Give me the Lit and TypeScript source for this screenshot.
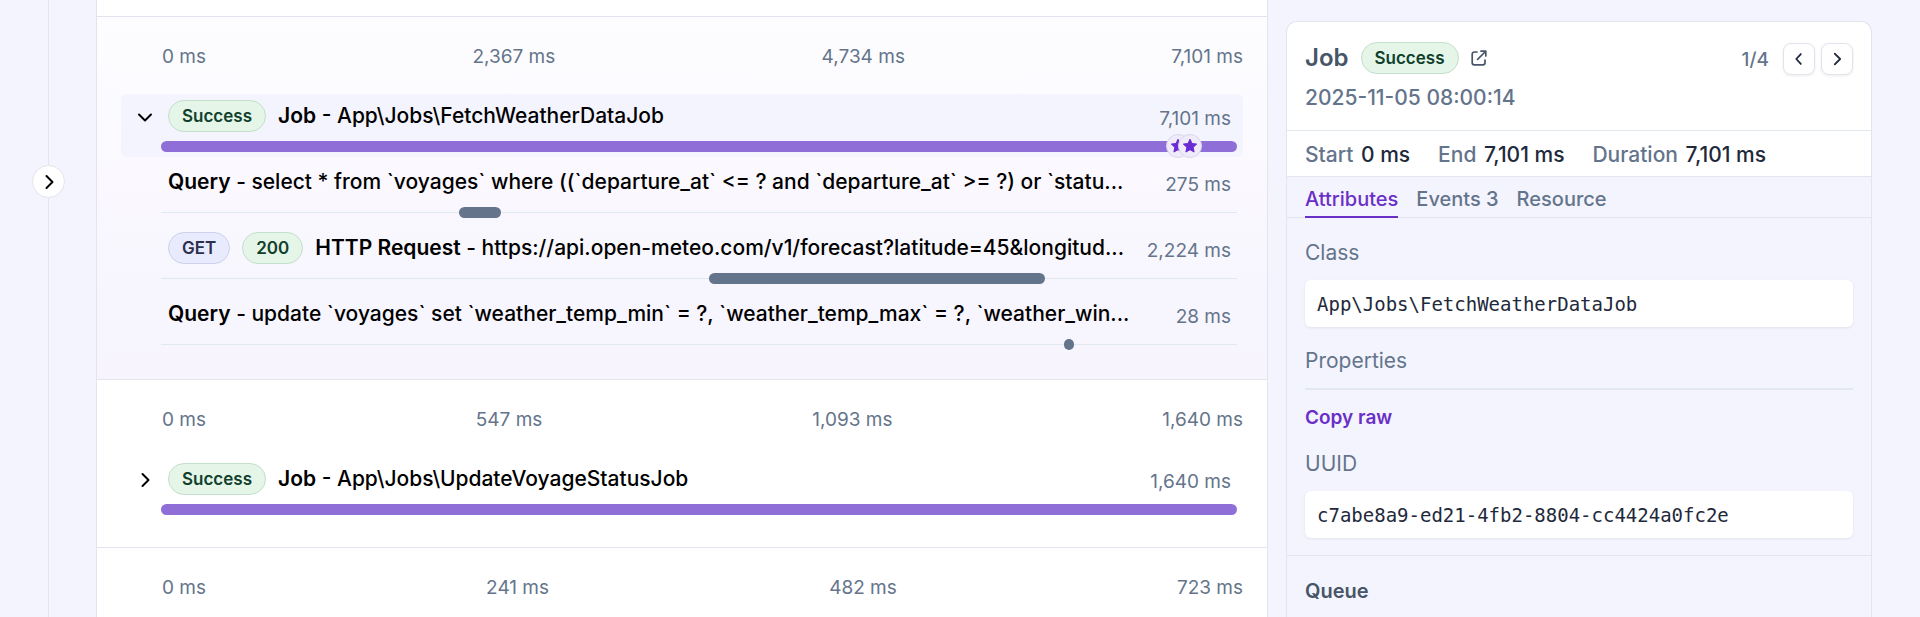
import { LitElement, html, css, svg, nothing } from "lit";
import { customElement, property, state } from "lit/decorators.js";
import { classMap } from "lit/directives/class-map.js";

type Badge = { text: string; tone: "green" | "blue" };
type Span = {
  kind: string;
  detail: string;
  badges?: Badge[];
  duration: string;
  start: number;
  width: number;
  events?: number[];
};
type Trace = { ticks: string[]; job?: Span; children?: Span[]; open?: boolean };

const traces: Trace[] = [
  {
    ticks: ["0 ms", "2,367 ms", "4,734 ms", "7,101 ms"],
    open: true,
    job: {
      kind: "Job",
      detail: "App\\Jobs\\FetchWeatherDataJob",
      badges: [{ text: "Success", tone: "green" }],
      duration: "7,101 ms",
      start: 0,
      width: 100,
      events: [94.5, 95.6],
    },
    children: [
      {
        kind: "Query",
        detail: "select * from `voyages` where ((`departure_at` <= ? and `departure_at` >= ?) or `statu...",
        duration: "275 ms",
        start: 27.7,
        width: 3.9,
      },
      {
        kind: "HTTP Request",
        detail: "https://api.open-meteo.com/v1/forecast?latitude=45&longitud...",
        badges: [
          { text: "GET", tone: "blue" },
          { text: "200", tone: "green" },
        ],
        duration: "2,224 ms",
        start: 50.9,
        width: 31.3,
      },
      {
        kind: "Query",
        detail: "update `voyages` set `weather_temp_min` = ?, `weather_temp_max` = ?, `weather_win...",
        duration: "28 ms",
        start: 83.9,
        width: 0.4,
      },
    ],
  },
  {
    ticks: ["0 ms", "547 ms", "1,093 ms", "1,640 ms"],
    job: {
      kind: "Job",
      detail: "App\\Jobs\\UpdateVoyageStatusJob",
      badges: [{ text: "Success", tone: "green" }],
      duration: "1,640 ms",
      start: 0,
      width: 100,
    },
  },
  { ticks: ["0 ms", "241 ms", "482 ms", "723 ms"] },
];

const chevron = (dir: "left" | "right" | "down", size = 20) => {
  const d = {
    left: "M12 4.5 7 10l5 5.5",
    right: "M7.5 4 13.5 10l-6 6",
    down: "M4 7.5 10 13.5l6-6",
  }[dir];
  return html`<svg width=${size} height=${size} viewBox="0 0 20 20" fill="none" stroke="currentColor"
    stroke-width="2" stroke-linecap="round" stroke-linejoin="round" aria-hidden="true">${svg`<path d=${d} />`}</svg>`;
};

const star = html`<svg width="16" height="16" viewBox="0 0 16 16" fill="currentColor" aria-hidden="true">
  <path d="M8 1.2 10 5.5l4.7.6-3.5 3.2.9 4.7L8 11.7 3.9 14l.9-4.7L1.3 6.1 6 5.5z" stroke="currentColor" stroke-width="1" stroke-linejoin="round" />
</svg>`;

const badgeStyles = css`
  .badge {
    flex: none;
    box-sizing: border-box;
    height: 32px;
    padding: 0 13px;
    border: 1px solid;
    border-radius: 16px;
    font-size: 17px;
    font-weight: 600;
    line-height: 30px;
  }
  .green {
    background: #e5f6e9;
    border-color: #c4dfcb;
    color: #10402c;
  }
  .blue {
    background: #e8ebfe;
    border-color: #cdd2ea;
    color: #2b2f4e;
  }
`;

@customElement("trace-row")
class TraceRow extends LitElement {
  @property({ attribute: false }) span!: Span;
  @property({ type: Boolean }) selected = false;
  @property({ type: Boolean }) expandable = false;
  @property({ type: Boolean }) open = false;

  static styles = [
    badgeStyles,
    css`
      :host {
        display: block;
      }
      .row {
        display: grid;
        grid-template-columns: 40px minmax(0, 1fr);
        padding-right: 6px;
        height: 63px;
        border-radius: 6px;
      }
      .selected {
        background: #f4f4fe;
      }
      .toggle {
        display: grid;
        place-items: center;
        width: 32px;
        height: 32px;
        margin: 7px 0 0 8px;
        padding: 0;
        border: 0;
        background: none;
        color: #000;
      }
      .body {
        grid-column: 2;
        min-width: 0;
      }
      .line {
        display: flex;
        align-items: center;
        gap: 12px;
        height: 46px;
        padding: 0 6px 2px 7px;
        box-sizing: border-box;
        margin-bottom: 1px;
      }
      .label {
        flex: 1;
        min-width: 0;
        overflow: hidden;
        white-space: nowrap;
        text-overflow: ellipsis;
        font-size: 21px;
        line-height: 28px;
        font-weight: 500;
        color: #000;
      }
      .kind {
        font-weight: 600;
      }
      .duration {
        font-size: 19px;
        line-height: 24px;
        color: #64748b;
        padding-top: 5px;
      }
      .track {
        position: relative;
        height: 11px;
        background: linear-gradient(#e2e8f0, #e2e8f0) center / 100% 1px no-repeat;
      }
      .bar {
        box-sizing: border-box;
        min-width: 10px;
        height: 11px;
        border-radius: 6px;
        background: #64748b;
      }
      .job {
        background: #8f6fd7;
      }
      .event {
        position: absolute;
        top: -7px;
        display: grid;
        place-items: center;
        box-sizing: border-box;
        width: 24px;
        height: 24px;
        border: 1px solid #dcd5ee;
        border-radius: 50%;
        background: #efebfa;
        color: #6a2bd3;
      }
    `,
  ];

  render() {
    const s = this.span;
    return html`<div class=${classMap({ row: true, selected: this.selected })}>
      ${this.expandable
        ? html`<button class="toggle" aria-label="Toggle children" aria-expanded=${this.open ? "true" : "false"}
            @click=${() => this.dispatchEvent(new CustomEvent("toggle-row"))}>
            ${chevron(this.open ? "down" : "right")}
          </button>`
        : nothing}
      <div class="body">
        <div class="line">
          ${s.badges?.map((b) => html`<span class="badge ${b.tone}">${b.text}</span>`)}
          <span class="label"><span class="kind">${s.kind}</span> - ${s.detail}</span>
          <span class="duration">${s.duration}</span>
        </div>
        <div class="track">
          <div class=${classMap({ bar: true, job: s.kind === "Job" })}
            style="margin-left:${s.start}%;width:${s.width}%"></div>
          ${s.events?.map((at) => html`<span class="event" style="left:calc(${at}% - 12px)">${star}</span>`)}
        </div>
      </div>
    </div>`;
  }
}

@customElement("trace-section")
class TraceSection extends LitElement {
  @property({ attribute: false }) trace!: Trace;
  @state() private closed = false;

  static styles = css`
    :host {
      display: block;
      border-top: 1px solid #e2e4ee;
    }
    .wrap {
      padding: 0 24px 24px;
    }
    .open {
      background: linear-gradient(#fdfdff, #faf8fe 50%, #f7f6fe 75%, #f7f4fe);
    }
    .ticks {
      display: flex;
      justify-content: space-between;
      padding: 28px 0 25px 41px;
      font-size: 19px;
      line-height: 24px;
      color: #64748b;
    }
    .root {
      margin-bottom: 3px;
    }
    .children {
      display: grid;
      gap: 3px;
    }
  `;

  render() {
    const t = this.trace;
    const open = !!t.open && !this.closed;
    return html`<section class=${classMap({ wrap: true, open })}>
      <div class="ticks">${t.ticks.map((x) => html`<span>${x}</span>`)}</div>
      ${t.job
        ? html`<trace-row class="root" .span=${t.job} expandable ?open=${open} ?selected=${open}
            @toggle-row=${() => (this.closed = !this.closed)}></trace-row>`
        : nothing}
      ${open
        ? html`<div class="children">${t.children?.map((c) => html`<trace-row .span=${c}></trace-row>`)}</div>`
        : nothing}
    </section>`;
  }
}

@customElement("detail-panel")
class DetailPanel extends LitElement {
  @state() private tab = 0;

  static styles = [
    badgeStyles,
    css`
      :host {
        display: flex;
        flex-direction: column;
        box-sizing: border-box;
        border: 1px solid #e2e4ef;
        border-bottom: 0;
        border-radius: 11px 11px 0 0;
        overflow: hidden;
        color: #64748b;
      }
      .head {
        padding: 19px 18px 18px;
        background: #fff;
        border-bottom: 1px solid #e2e8f0;
      }
      .title {
        display: flex;
        align-items: center;
        height: 34px;
        gap: 12px;
      }
      h2 {
        margin: 0;
        font-size: 24px;
        line-height: 32px;
        font-weight: 600;
        color: #475569;
      }
      .external {
        display: flex;
        color: #475569;
      }
      .pager {
        display: flex;
        align-items: center;
        gap: 6px;
        margin: 2px 0 0 auto;
        font-size: 19px;
        font-weight: 500;
      }
      .count {
        margin-right: 8px;
      }
      .pager button {
        display: grid;
        place-items: center;
        box-sizing: border-box;
        width: 32px;
        height: 32px;
        padding: 0;
        border: 1px solid #e2e4ec;
        border-radius: 8px;
        background: #fff;
        color: #1e293b;
        box-shadow: 0 1px 3px rgb(15 23 42 / 8%);
      }
      .date {
        margin-top: 9px;
        font-size: 21px;
        line-height: 28px;
        font-weight: 500;
      }
      .stats {
        display: flex;
        gap: 28px;
        padding: 10px 18px 7px;
        background: #fff;
        border-bottom: 1px solid #e2e4ef;
        font-size: 21px;
        line-height: 28px;
        font-weight: 500;
      }
      .stats dt,
      .stats dd {
        display: inline;
        margin: 0;
      }
      .stats dd {
        color: #1e293b;
        margin-left: 2px;
      }
      .stats,
      .fields {
        margin: 0;
      }
      .tabs {
        display: flex;
        gap: 18px;
        padding: 0 18px;
        height: 40px;
        border-bottom: 1px solid #e2e4ef;
      }
      .tabs button {
        box-sizing: border-box;
        height: 41px;
        padding: 4px 0 0;
        border: 0;
        border-bottom: 2px solid transparent;
        background: none;
        font-family: inherit;
        font-size: 20px;
        font-weight: 500;
        line-height: 28px;
        color: #64748b;
      }
      .tabs .active {
        border-color: #6a2fc6;
        color: #6a2fc6;
      }
      .fields {
        padding: 21px 18px 17px;
        border-bottom: 1px solid #e2e4ef;
      }
      .name {
        font-size: 21px;
        line-height: 28px;
      }
      .value {
        margin: 13px 0 20px;
        padding: 10px 12px 9px;
        border-radius: 6px;
        background: #fff;
        box-shadow: 0 1px 3px rgb(15 23 42 / 8%);
        font: 19px/28px "DejaVu Sans Mono", monospace;
        color: #1e293b;
      }
      .value:last-child {
        margin-bottom: 0;
      }
      .empty {
        height: 2px;
        margin: 13px 0 14px;
        background: #e2e8f0;
      }
      .copy {
        display: block;
        margin-bottom: 18px;
        padding: 0;
        border: 0;
        background: none;
        font-family: inherit;
        font-size: 19px;
        font-weight: 600;
        line-height: 28px;
        color: #6a2fc6;
      }
      h3 {
        margin: 0;
        padding: 21px 18px;
        font-size: 20px;
        line-height: 28px;
        font-weight: 600;
        color: #475569;
      }
    `,
  ];

  render() {
    return html`
      <header class="head">
        <div class="title">
          <h2>Job</h2>
          <span class="badge green">Success</span>
          <a class="external" href="#job" aria-label="Open job">
            <svg width="16" height="16" viewBox="0 0 16 16" fill="none" stroke="currentColor" stroke-width="1.7"
              stroke-linecap="round" stroke-linejoin="round" aria-hidden="true">
              <path d="M6 2H3.2A2 2 0 0 0 1.2 4v8.8a2 2 0 0 0 2 2H12a2 2 0 0 0 2-2V10M10 1.2h4.8V6M14.5 1.5 6.6 9.4" />
            </svg>
          </a>
          <div class="pager">
            <span class="count">1/4</span>
            <button aria-label="Previous">${chevron("left", 18)}</button>
            <button aria-label="Next">${chevron("right", 18)}</button>
          </div>
        </div>
        <div class="date">2025-11-05 08:00:14</div>
      </header>
      <dl class="stats">
        <div><dt>Start</dt> <dd>0 ms</dd></div>
        <div><dt>End</dt> <dd>7,101 ms</dd></div>
        <div><dt>Duration</dt> <dd>7,101 ms</dd></div>
      </dl>
      <div class="tabs" role="tablist">
        ${["Attributes", "Events 3", "Resource"].map(
          (name, i) => html`<button role="tab" aria-selected=${this.tab === i ? "true" : "false"}
            class=${classMap({ active: this.tab === i })} @click=${() => (this.tab = i)}>${name}</button>`
        )}
      </div>
      <div class="fields">
        <div class="name">Class</div>
        <div class="value">App\\Jobs\\FetchWeatherDataJob</div>
        <div class="name">Properties</div>
        <div class="empty"></div>
        <button class="copy">Copy raw</button>
        <div class="name">UUID</div>
        <div class="value">c7abe8a9-ed21-4fb2-8804-cc4424a0fc2e</div>
      </div>
      <h3>Queue</h3>
    `;
  }
}

@customElement("app-root")
class AppRoot extends LitElement {
  static styles = css`
    :host {
      display: grid;
      grid-template-columns: 96px minmax(0, 1fr) 652px;
      height: 100vh;
      overflow: hidden;
      background: #f4f4fe;
      font-family: Inter, sans-serif;
    }
    .rail {
      position: relative;
      background: linear-gradient(#e2e4ef, #e2e4ef) 48px 0 / 1px 100% no-repeat;
    }
    .expand {
      position: absolute;
      top: 165px;
      left: 32px;
      display: grid;
      place-items: center;
      box-sizing: border-box;
      width: 33px;
      height: 33px;
      padding: 0;
      border: 1px solid #e2e4ec;
      border-radius: 50%;
      background: #fff;
      color: #000;
    }
    .traces {
      min-width: 0;
      padding-top: 16px;
      border: solid #e2e4f0;
      border-width: 0 1px;
      background: #fff;
    }
    .aside {
      display: grid;
      padding: 21px 48px 0 18px;
      min-width: 0;
    }
    @media (max-width: 1400px) {
      :host {
        grid-template-columns: 96px minmax(0, 1fr) 40%;
      }
    }
  `;

  render() {
    return html`
      <nav class="rail"><button class="expand" aria-label="Expand sidebar">${chevron("right")}</button></nav>
      <main class="traces">${traces.map((t) => html`<trace-section .trace=${t}></trace-section>`)}</main>
      <aside class="aside"><detail-panel></detail-panel></aside>
    `;
  }
}
